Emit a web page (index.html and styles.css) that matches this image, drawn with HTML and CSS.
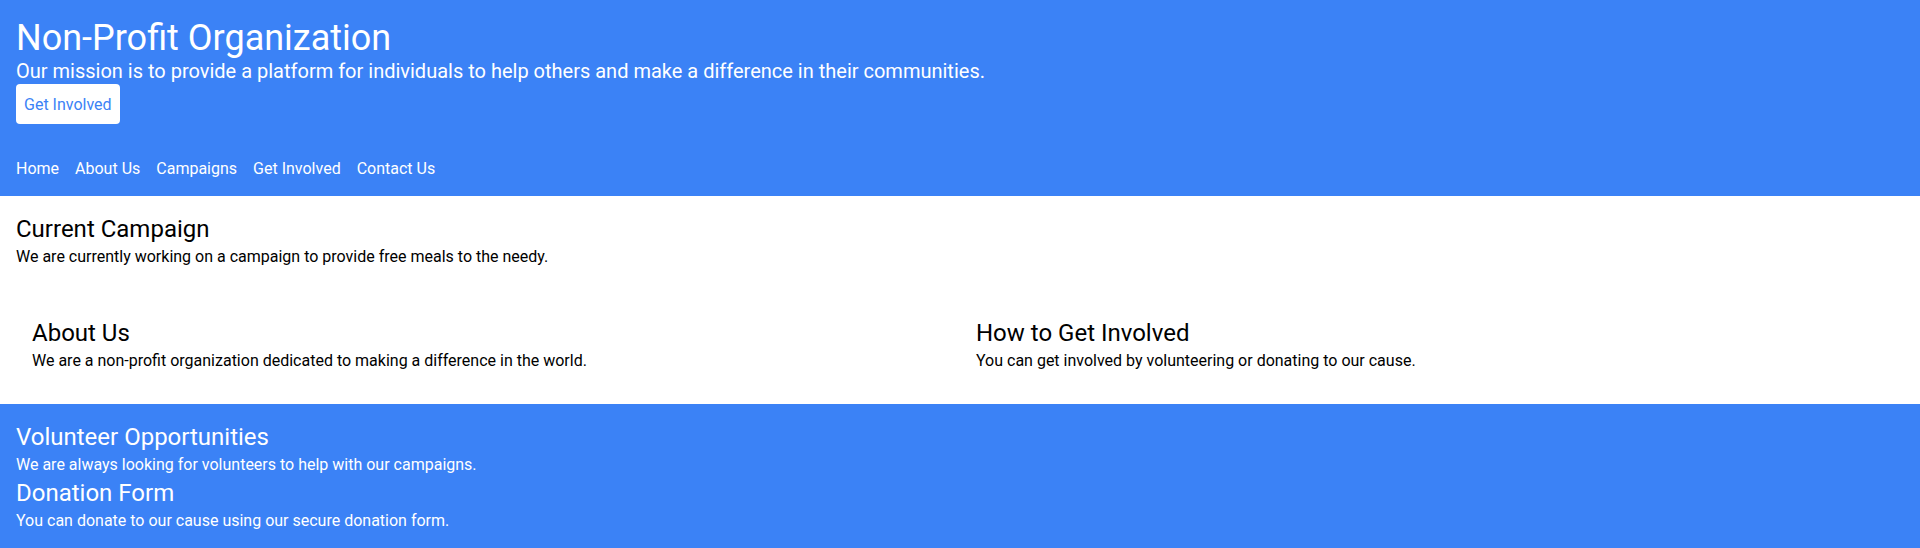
FILE: index.html
```html
<!DOCTYPE html>
<html lang="en">
<head>
<meta charset="utf-8">
<title>Non-Profit Organization</title>
<link rel="stylesheet" href="styles.css">
</head>
<body>
<header class="hero">
  <h1 class="hero-title">Non-Profit Organization</h1>
  <p class="hero-text">Our mission is to provide a platform for individuals to help others and make a difference in their communities.</p>
  <button class="hero-btn">Get Involved</button>
</header>
<nav class="nav">
  <ul class="nav-list">
    <li><a href="#">Home</a></li>
    <li><a href="#">About Us</a></li>
    <li><a href="#">Campaigns</a></li>
    <li><a href="#">Get Involved</a></li>
    <li><a href="#">Contact Us</a></li>
  </ul>
</nav>
<main class="main">
  <section>
    <h2 class="title">Current Campaign</h2>
    <p class="text">We are currently working on a campaign to provide free meals to the needy.</p>
  </section>
  <div class="cols">
    <section class="col">
      <h2 class="title">About Us</h2>
      <p class="text">We are a non-profit organization dedicated to making a difference in the world.</p>
    </section>
    <section class="col">
      <h2 class="title">How to Get Involved</h2>
      <p class="text">You can get involved by volunteering or donating to our cause.</p>
    </section>
  </div>
</main>
<footer class="footer">
  <h2 class="title">Volunteer Opportunities</h2>
  <p class="text">We are always looking for volunteers to help with our campaigns.</p>
  <h2 class="title">Donation Form</h2>
  <p class="text">You can donate to our cause using our secure donation form.</p>
</footer>
</body>
</html>
```
FILE: styles.css
```css
* { box-sizing: border-box; }
html, body { margin: 0; padding: 0; }
body {
  font-family: Roboto, "Noto Sans", sans-serif;
  font-size: 16px;
  line-height: 24px;
  color: #000;
  background: #fff;
}
h1, h2, p, ul { margin: 0; padding: 0; }

/* Vertical metrics tuned so baselines sit where the reference font places them */
.hero {
  background: #3b82f6;
  color: #fff;
  padding: 16px;
}
.hero-title {
  font-size: 36px;
  line-height: 35px;
  padding-top: 5px;
  font-weight: 400;
}
.hero-text {
  font-size: 20px;
  line-height: 25px;
  padding-top: 3px;
}
.hero-btn {
  display: block;
  font-family: inherit;
  font-size: 16px;
  line-height: 22px;
  background: #fff;
  color: #3b82f6;
  border: 0;
  border-radius: 4px;
  padding: 10px 8px 8px;
  margin: 0;
  cursor: pointer;
}
.nav {
  background: #3b82f6;
  padding: 16px;
}
.nav-list {
  list-style: none;
  display: flex;
  gap: 16px;
}
.nav-list li {
  line-height: 22px;
  padding-top: 2px;
}
.nav-list a {
  color: #fff;
  text-decoration: none;
}
.main {
  padding: 16px;
}
.title {
  font-size: 24px;
  line-height: 29px;
  padding-top: 3px;
  font-weight: 400;
}
.text {
  line-height: 22px;
  padding-top: 2px;
}
.cols {
  display: grid;
  grid-template-columns: 1fr 1fr;
  margin-top: 32px;
}
.col {
  padding: 16px;
}
.footer {
  background: #3b82f6;
  color: #fff;
  padding: 16px;
}
```
